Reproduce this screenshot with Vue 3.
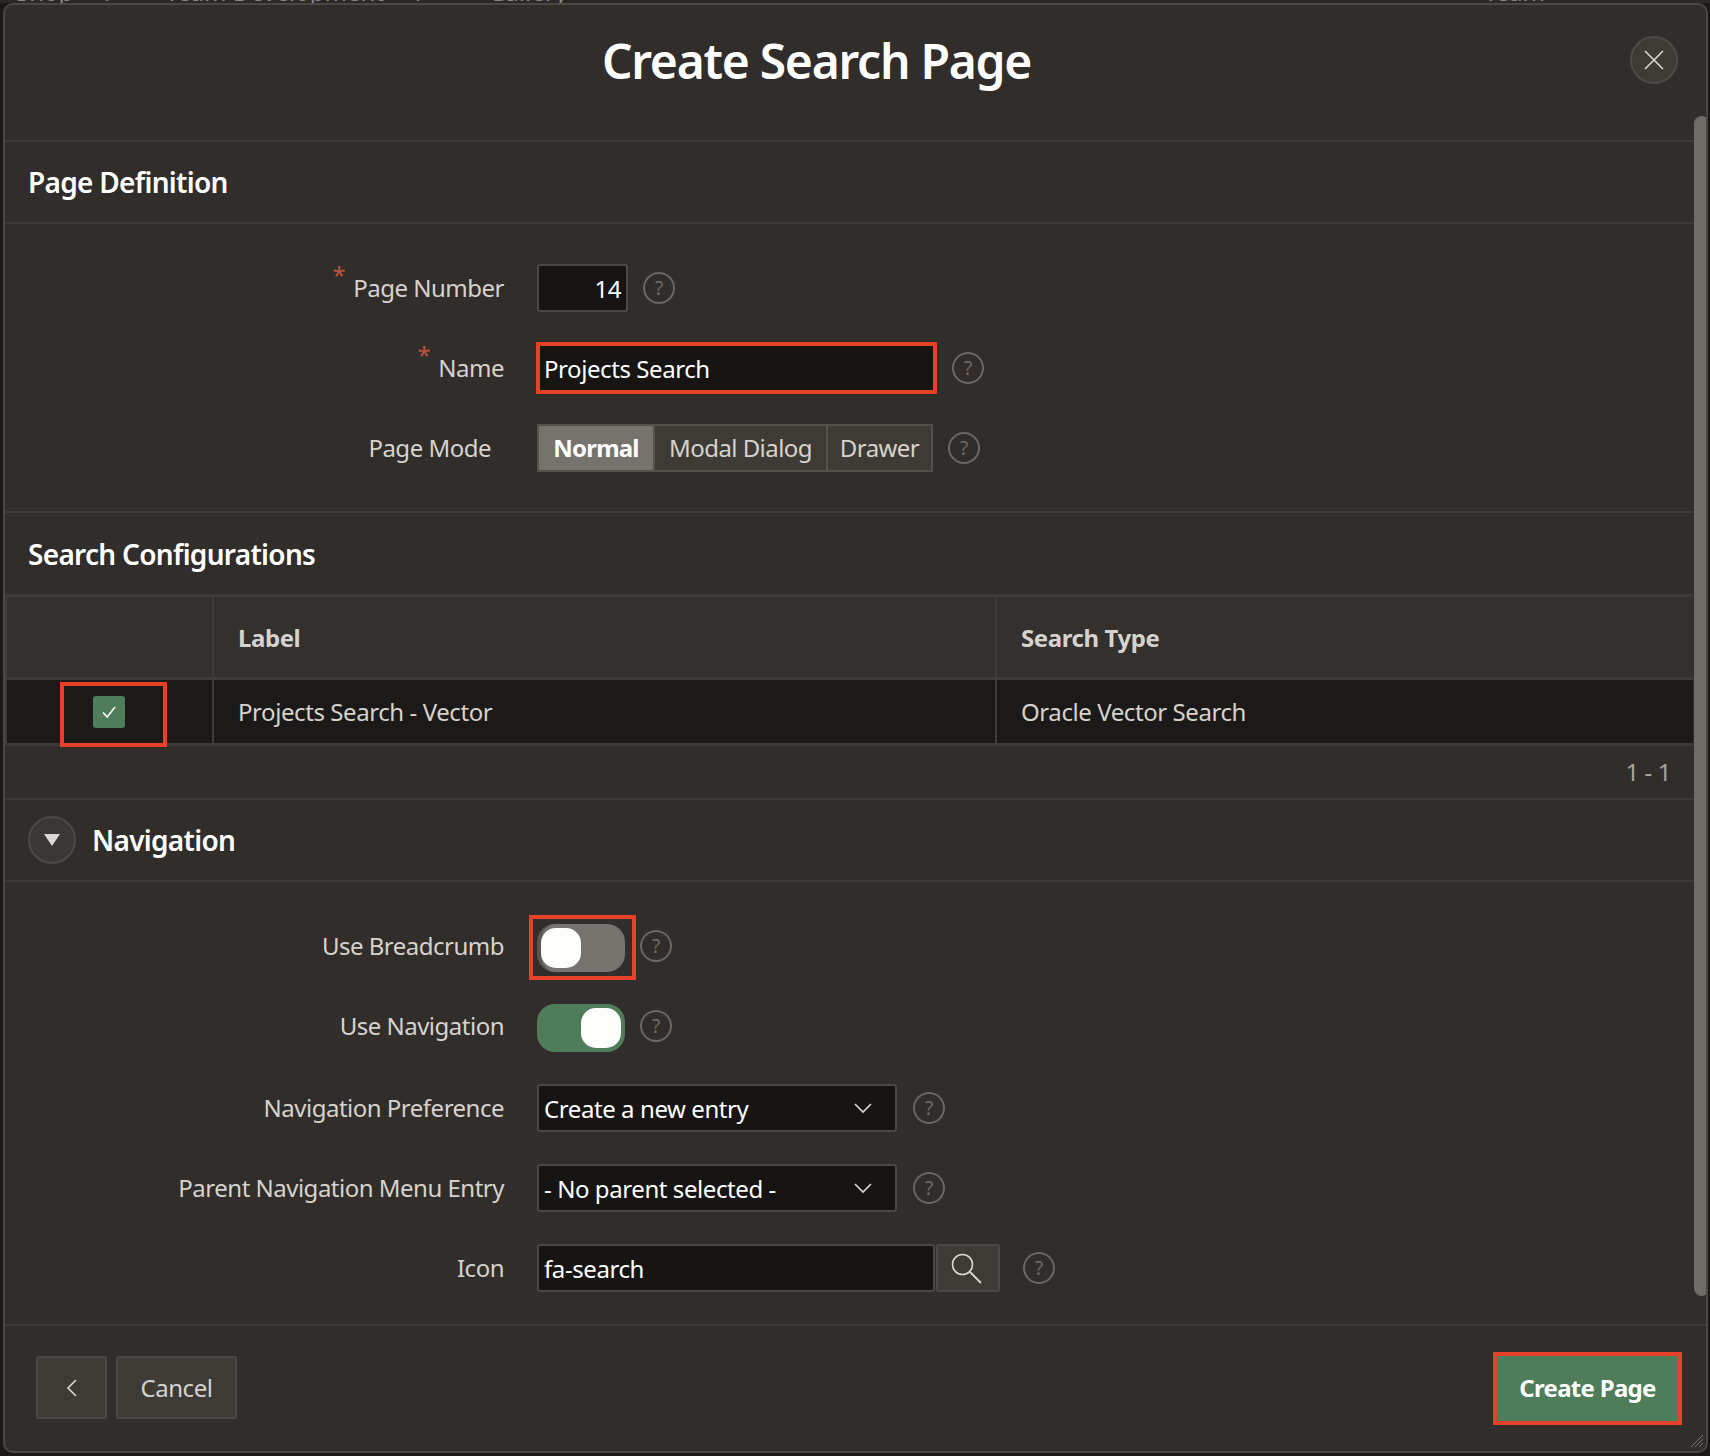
<script setup>
</script>

<template>
  <div class="page">
    <div class="strip">
      <div class="strip-left">
        <span class="s1">Shop</span>
        <span class="s2">⌄</span>
        <span class="s3">Team Development</span>
        <span class="s4">⌄</span>
        <span class="s5">Gallery</span>
      </div>
      <span class="s6">Team</span>
    </div>
    <div class="dialog">
      <header class="header">
        <h1 class="title">Create Search Page</h1>
        <button class="close">
          <svg width="22" height="22" viewBox="0 0 22 22"><path d="M2 2 L20 20 M20 2 L2 20" stroke="#dbd8d3" stroke-width="1.6" fill="none" /></svg>
        </button>
      </header>

      <main class="body">
        <section class="sec-head sec-def"><h2>Page Definition</h2></section>
        <div class="form form-a">
          <div class="row">
            <label class="label"><span class="req">*</span>Page Number</label>
            <div class="input num">14</div>
            <span class="help">?</span>
          </div>
          <div class="row">
            <label class="label"><span class="req">*</span>Name</label>
            <div class="input name marked-name">Projects Search</div>
            <span class="help">?</span>
          </div>
          <div class="row">
            <label class="label label-mode">Page Mode</label>
            <div class="segs">
              <span class="seg seg-on">Normal</span>
              <span class="seg seg-modal">Modal Dialog</span>
              <span class="seg seg-drawer">Drawer</span>
            </div>
            <span class="help">?</span>
          </div>
        </div>

        <section class="sec-head sec-config"><h2>Search Configurations</h2></section>
        <div class="table">
          <div class="tr th">
            <div class="c1"></div>
            <div class="c2">Label</div>
            <div class="c3">Search Type</div>
          </div>
          <div class="tr td">
            <div class="c1">
              <span class="check">
                <svg width="18" height="18" viewBox="0 0 18 18"><path d="M3 9.5 L7.2 14 L15 4" stroke="#fff" stroke-width="1.5" fill="none" /></svg>
              </span>
              <span class="mark mark-check"></span>
            </div>
            <div class="c2">Projects Search - Vector</div>
            <div class="c3">Oracle Vector Search</div>
          </div>
        </div>
        <div class="pager">1 - 1</div>

        <section class="sec-head sec-nav">
          <span class="disc"><svg width="18" height="14" viewBox="0 0 18 14"><path d="M1 1 H17 L9 13 Z" fill="#dbd8d3" /></svg></span>
          <h2>Navigation</h2>
        </section>
        <div class="form form-b">
          <div class="row row-toggle">
            <label class="label">Use Breadcrumb</label>
            <div class="toggle off"><span class="knob"></span><span class="mark mark-toggle"></span></div>
            <span class="help">?</span>
          </div>
          <div class="row row-toggle">
            <label class="label">Use Navigation</label>
            <div class="toggle on"><span class="knob"></span></div>
            <span class="help">?</span>
          </div>
          <div class="row">
            <label class="label">Navigation Preference</label>
            <div class="input select">Create a new entry
              <svg width="20" height="12" viewBox="0 0 20 12"><path d="M2 2 L10 10 L18 2" stroke="#dbd8d3" stroke-width="1.6" fill="none" /></svg>
            </div>
            <span class="help">?</span>
          </div>
          <div class="row">
            <label class="label">Parent Navigation Menu Entry</label>
            <div class="input select">- No parent selected -
              <svg width="20" height="12" viewBox="0 0 20 12"><path d="M2 2 L10 10 L18 2" stroke="#dbd8d3" stroke-width="1.6" fill="none" /></svg>
            </div>
            <span class="help">?</span>
          </div>
          <div class="row">
            <label class="label">Icon</label>
            <div class="input name">fa-search</div>
            <button class="search">
              <svg class="search-icon" width="32" height="32" viewBox="0 0 32 32"><circle cx="12.5" cy="12.5" r="10" stroke="#dbd8d3" stroke-width="1.6" fill="none" /><path d="M20 20 L31 31" stroke="#dbd8d3" stroke-width="1.8" /></svg>
            </button>
            <span class="help help-icon">?</span>
          </div>
        </div>
      </main>

      <footer class="footer">
        <div class="foot-left">
          <button class="btn back">
            <svg width="12" height="20" viewBox="0 0 12 20"><path d="M10 2 L2 10 L10 18" stroke="#dbd8d3" stroke-width="1.6" fill="none" /></svg>
          </button>
          <button class="btn cancel">Cancel</button>
        </div>
        <button class="create">Create Page</button>
      </footer>

      <div class="scrollbar"></div>
      <svg class="grip" width="14" height="14" viewBox="0 0 14 14"><path d="M1 13 L13 1 M5 13 L13 5 M9 13 L13 9" stroke="#77736e" stroke-width="1" /></svg>
    </div>
  </div>
</template>

<style>
html, body { margin: 0; background: #1b1917; }
</style>

<style scoped>
* { box-sizing: border-box; }
.page { width: 1710px; height: 1456px; overflow: hidden; font-family: "Noto Sans", "Open Sans", sans-serif; color: #d6d3ce; font-size: 24px; letter-spacing: -0.42px; }
h1, h2 { margin: 0; }
button { font-family: inherit; letter-spacing: inherit; padding: 0; cursor: pointer; }

.strip { height: 3px; background: #2b2826; overflow: hidden; display: flex; justify-content: space-between; color: #8b8884; line-height: 24px; font-size: 24px; letter-spacing: 0; }
.strip-left { display: flex; margin-top: -20px; height: 24px; }
.strip span { display: block; white-space: nowrap; }
.s1 { margin-left: 16px; }
.s2 { margin-left: 24px; }
.s3 { margin-left: 48px; }
.s4 { margin-left: 24px; }
.s5 { margin-left: 60px; }
.s6 { margin-top: -20px; margin-right: 165px; }

.dialog { position: relative; margin-left: 3px; width: 1705px; height: 1450px; background: #312d2a; border: 2px solid #4a4744; border-radius: 10px; display: flex; flex-direction: column; overflow: hidden; }

.header { height: 137px; flex: none; border-bottom: 2px solid #3e3b38; display: flex; align-items: center; justify-content: center; position: relative; padding-bottom: 23px; padding-right: 78px; }
.title { font-size: 48px; font-weight: 600; color: #fff; line-height: 64px; letter-spacing: -1.27px; }
.close { position: absolute; right: 28px; top: 31px; width: 48px; height: 48px; border-radius: 50%; background: #3e3b37; border: 2px solid #4e4b47; display: flex; align-items: center; justify-content: center; }

.body { flex: none; width: 1688px; }
.sec-head { height: 81px; border-bottom: 2px solid #3e3b38; display: flex; align-items: center; padding-left: 23px; }
.sec-head h2 { font-size: 28px; font-weight: 600; color: #fff; line-height: 40px; letter-spacing: -0.7px; }
.sec-def { height: 82px; }
.sec-config { height: 81px; border-bottom: none; }
.sec-nav { padding-left: 23px; gap: 16px; height: 82px; }

.form { display: flex; flex-direction: column; gap: 32px; border-bottom: 2px solid #3e3b38; }
.form-a { padding: 40px 0 39px; }
.form-b { padding: 42px 0 32px; width: 1703px; }

.row { display: flex; align-items: center; height: 48px; }
.label { width: 499px; flex: none; text-align: right; margin-right: 33px; color: #d6d3ce; line-height: 34px; white-space: nowrap; letter-spacing: -0.5px; }
.label-mode { padding-right: 13px; }
.req { color: #b9553f; vertical-align: 13px; margin-right: 8px; line-height: 0; }
.row-toggle > .label, .row-toggle > .help { margin-bottom: 4px; }

.input { height: 48px; background: #161513; border: 2px solid #4b4845; border-radius: 3px; color: #fff; display: flex; align-items: center; padding: 0 5px; flex: none; position: relative; white-space: nowrap; }
.num { width: 91px; justify-content: flex-end; }
.num + .help { margin-left: 15px; }
.name { width: 398px; }
.marked-name { width: 397px; margin: 0 1px; padding-left: 4px; border-radius: 0; border-color: #161513; outline: 4px solid #e8412a; outline-offset: -2px; }
.select { width: 360px; justify-content: space-between; padding-right: 22px; }

.help { width: 32px; height: 32px; flex: none; margin-left: 16px; border: 2px solid #6b6863; border-radius: 50%; color: #6f6c67; font-size: 19px; display: flex; align-items: center; justify-content: center; line-height: 1; }
.help-icon { margin-left: 23px; }
.segs + .help { margin-left: 15px; }

.segs { display: flex; height: 48px; background: #3e3b37; border: 2px solid #55524e; flex: none; letter-spacing: -0.55px; }
.seg { display: flex; align-items: center; justify-content: center; padding-bottom: 1px; }
.seg-on { width: 114px; background: #76726d; color: #fff; font-weight: 700; letter-spacing: -0.8px; }
.seg-modal { width: 173px; border-left: 2px solid #55524e; }
.seg-drawer { width: 105px; border-left: 2px solid #55524e; }

.table { width: 1688px; border-top: 3px solid #3e3b38; }
.tr { display: grid; grid-template-columns: 207px 783px 1fr; }
.tr > div { display: flex; align-items: center; padding-left: 24px; border-left: 2px solid #3e3b38; position: relative; }
.tr > .c1 { padding: 0 2px 0 0; justify-content: center; }
.th { height: 83px; border-bottom: 3px solid #3e3b38; background: #33302d; }
.th > div { font-weight: 700; color: #d6d3ce; }
.td { height: 66px; background: #1b1a18; border-bottom: 3px solid #3e3b38; color: #d6d3ce; }
.check { width: 32px; height: 32px; border-radius: 3px; background: #4f7d5a; display: flex; align-items: center; justify-content: center; }

.mark { position: absolute; border: 4px solid #e8412a; pointer-events: none; }
.mark-check { left: 53px; top: 2px; width: 107px; height: 65px; }
.mark-toggle { left: -12px; top: -9px; width: 107px; height: 65px; }

.pager { width: 1688px; height: 54px; display: flex; align-items: center; justify-content: flex-end; padding: 0 22px 2px 0; color: #a8a5a0; border-bottom: 2px solid #3e3b38; }

.disc { width: 48px; height: 48px; border-radius: 50%; background: #3a3734; border: 2px solid #4e4b47; display: flex; align-items: center; justify-content: center; }

.toggle { width: 88px; height: 48px; border-radius: 18px; flex: none; position: relative; display: flex; align-items: center; padding: 4px; }
.toggle.off { background: #76726d; border-left: 4px solid #5a5753; padding-left: 0; }
.toggle.on { background: #4f7d5a; justify-content: flex-end; }
.toggle.on + .help, .toggle.off + .help { margin-left: 15px; }
.knob { width: 40px; height: 40px; border-radius: 15px; background: #fdfdfb; display: block; }

.search { width: 64px; height: 48px; margin-left: 1px; background: #3e3b37; border: 2px solid #4b4845; border-radius: 2px; display: flex; align-items: center; justify-content: center; flex: none; }
.search-icon { margin-right: 4px; }

.footer { flex: 1; display: flex; justify-content: space-between; padding: 30px 28px 0 31px; align-items: flex-start; }
.foot-left { display: flex; gap: 9px; }
.btn { height: 63px; background: #3e3b37; border: 2px solid #4b4845; border-radius: 3px; color: #d6d3ce; font-size: 24px; display: flex; align-items: center; justify-content: center; }
.back { width: 71px; }
.cancel { width: 121px; }
.create { width: 181px; height: 65px; padding-bottom: 2px; background: #4f7d5a; border: none; border-radius: 0; color: #fff; font-size: 24px; font-weight: 700; letter-spacing: -0.7px; outline: 4px solid #e8412a; }

.scrollbar { position: absolute; left: 1689px; top: 111px; width: 15px; height: 1180px; background: #6f6d68; border-radius: 8px; }
.grip { position: absolute; right: 2px; bottom: 3px; }
</style>
